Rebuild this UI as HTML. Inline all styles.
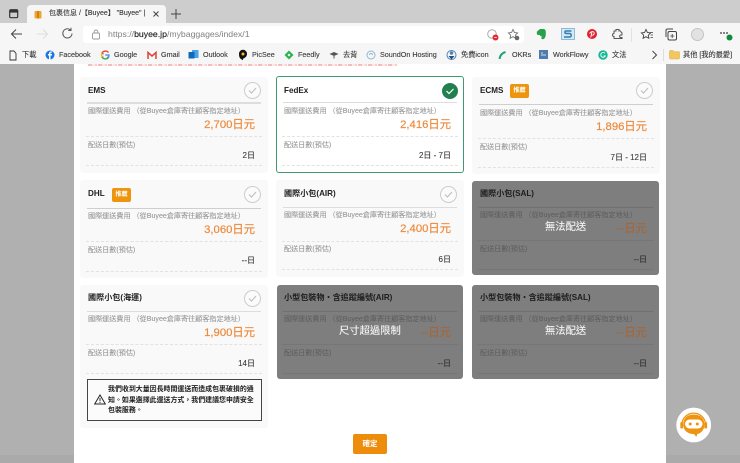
<!DOCTYPE html>
<html lang="zh-Hant">
<head>
<meta charset="utf-8">
<title>包裹信息</title>
<style>
html,body{margin:0;padding:0;width:740px;height:463px;overflow:hidden;background:#b0b0b0}
body{position:relative;font-family:"Liberation Sans","Noto Sans CJK TC",sans-serif}
#w{position:absolute;left:0;top:0;width:740px;height:463px;overflow:hidden;filter:blur(.25px)}
.a{position:absolute;white-space:nowrap}
.tb{font-size:7.2px;color:#3a3a3a;line-height:10px;top:50px;position:absolute;white-space:nowrap;-webkit-text-stroke:.12px #3a3a3a}
.card{position:absolute;background:#f9f9f9;border-radius:3px;width:188px}
.card>*{position:absolute;white-space:nowrap}
.t{left:8px;top:0;font-size:8.1px;font-weight:700;color:#222;line-height:10px}
.hr{left:7px;width:174px;height:1.5px;background:#ddd}
.l{left:8px;font-size:7.1px;color:#969696;line-height:10px;-webkit-text-stroke:.08px #969696}
.p{right:13px;font-size:11.3px;color:#ee8a3c;line-height:14px;-webkit-text-stroke:.2px #ee8a3c}
.d{right:13px;font-size:8px;color:#3a3a3a;line-height:10px;-webkit-text-stroke:.12px #3a3a3a}
.dash{left:6px;width:176px;border-top:1px dashed #e2e2e2;height:0}
.c{right:7px;width:15px;height:15px;border:1px solid #ccc;border-radius:50%;background:#fbfbfb}
.c svg{position:absolute;left:3px;top:3px}
.tag{width:19px;height:14px;border-radius:2px;background:#ee950f;color:#fff;font-size:6.2px;font-weight:700;text-align:center;line-height:14px}
.g{background:#7e7e7e;border:0}
.g .t{color:#1d1d1d}.g .hr{background:#707070;height:1px}.g .l{color:#5c5c5c;-webkit-text-stroke:0}
.g .p{color:#a5673a;-webkit-text-stroke:.2px #a5673a}.g .d{color:#2f2f2f;-webkit-text-stroke:.1px #2f2f2f}.g .dash{border-top:1px solid #767676}
.msg{font-size:10.3px;color:#f6f6f6;line-height:12px;-webkit-text-stroke:.1px #f6f6f6}
</style>
</head>
<body>
<div id="w">
<!-- browser chrome -->
<div class="a" style="left:0;top:0;width:740px;height:23px;background:#cdcdcd"></div>
<div class="a" style="left:0;top:23px;width:740px;height:41px;background:#f6f6f6"></div>
<div class="a" style="left:27px;top:5px;width:139px;height:18px;background:#f6f6f6;border-radius:4px 4px 0 0"></div>
<svg class="a" style="left:9px;top:9px" width="10" height="10"><rect x=".7" y=".7" width="8" height="8" rx="1.2" fill="none" stroke="#333" stroke-width="1.2"/><rect x="1" y="1" width="8" height="2.6" fill="#333"/></svg>
<svg class="a" style="left:33px;top:9px" width="10" height="10"><rect x="1.5" y="2" width="7" height="7.5" rx="1" fill="#efa72a"/><rect x="4.2" y="2" width="1.6" height="7.5" fill="#c9761a"/></svg>
<div class="a" style="left:49px;top:9px;font-size:7px;color:#333;line-height:10px;-webkit-text-stroke:.1px #333">包裹信息 /【Buyee】 "Buyee" |</div>
<svg class="a" style="left:152px;top:10px" width="9" height="9"><path d="M1.5 1.5l5 5M6.5 1.5l-5 5" stroke="#444" stroke-width="1"/></svg>
<svg class="a" style="left:170px;top:8px" width="12" height="12"><path d="M6 1v10M1 6h10" stroke="#444" stroke-width="1"/></svg>
<svg class="a" style="left:10px;top:28px" width="13" height="12"><path d="M12 6H1.5M6 1.5L1.5 6 6 10.5" fill="none" stroke="#444" stroke-width="1"/></svg>
<svg class="a" style="left:36px;top:28px" width="13" height="12"><path d="M1 6h10.5M7 1.5L11.5 6 7 10.5" fill="none" stroke="#ddd" stroke-width="1"/></svg>
<svg class="a" style="left:61px;top:27px" width="13" height="13"><path d="M11 6.5A4.6 4.6 0 1 1 9.500 3M10 .8V3.500H7.300" fill="none" stroke="#555" stroke-width="1"/></svg>
<div class="a" style="left:83px;top:26px;width:441px;height:17px;background:#fff;border-radius:3px"></div>
<svg class="a" style="left:91px;top:29px" width="10" height="11"><rect x="1.5" y="4" width="7" height="6" rx="1" fill="none" stroke="#999" stroke-width=".9"/><path d="M3.2 4V2.800a1.800 1.800 0 0 1 3.600 0V4" fill="none" stroke="#999" stroke-width=".9"/></svg>
<div class="a" style="left:108px;top:29px;font-size:8.7px;line-height:11px;color:#808080">https://<span style="color:#222;-webkit-text-stroke:.15px #222">buyee.jp</span>/mybaggages/index/1</div>
<svg class="a" style="left:486px;top:28px" width="14" height="14"><circle cx="6" cy="6" r="4.300" fill="none" stroke="#aaa"/><circle cx="9.500" cy="9.500" r="3" fill="#e22c35"/><path d="M8.300 9.500h2.400" stroke="#fff" stroke-width=".8"/></svg>
<svg class="a" style="left:507px;top:28px" width="14" height="14"><path d="M6 1.500l1.400 3 3.200.4-2.300 2.200.6 3.200L6 8.700l-2.900 1.600.6-3.200L1.400 4.900l3.200-.4z" fill="none" stroke="#777" stroke-width=".9"/><circle cx="10" cy="10" r="2.300" fill="#666"/></svg>
<svg class="a" style="left:535px;top:28px" width="12" height="13"><path d="M2 3.500L5 1h3.500C10 1 10.800 2 10.800 4c.2 3-.3 6-2 7-1.500.5-2.500 0-2.500-1 0-1.500 2-1.200 2-.6-1-.8-3-1-3.500-2.400H3C2 7 1.500 5.500 2 3.500z" fill="#27a24a"/></svg>
<svg class="a" style="left:561px;top:28px" width="14" height="13"><rect x=".5" y=".5" width="13" height="11" fill="#d5e8f5" stroke="#5a93bd" stroke-width=".6"/><path d="M10.500 3H5C3.500 3 3.500 5.500 5.500 5.500h3C10.800 5.500 10.800 9 8.500 9H3" fill="none" stroke="#2f7fb5" stroke-width="1.500"/></svg>
<svg class="a" style="left:586px;top:28px" width="12" height="12"><circle cx="6" cy="6" r="5" fill="#e0232e"/><path d="M4.700 9.500L6 4M3.900 5.800C3.300 3.600 8.100 2.500 8.200 5c0 2.400-2.300 2.600-2.700 1.600" fill="none" stroke="#fff" stroke-width=".9"/></svg>
<svg class="a" style="left:611px;top:28px" width="13" height="13"><path d="M5 1.500h3V3a1.300 1.300 0 0 1 2 1l1 1v2H9.500a1.300 1.300 0 0 0 0 2.500H11v1H3V8.500a1.500 1.500 0 0 1 0-3V3h2z" fill="none" stroke="#555" stroke-width="1"/></svg>
<div class="a" style="left:631px;top:28px;width:1px;height:14px;background:#e2e2e2"></div>
<svg class="a" style="left:640px;top:28px" width="14" height="13"><path d="M6 1.500l1.400 3 3.200.4-2.300 2.200.6 3.200L6 8.700l-2.900 1.600.6-3.200L1.400 4.900l3.200-.4z" fill="none" stroke="#444" stroke-width=".9"/><path d="M10 4.500h3M10.500 7h2.500M10.500 9.500h2.500" stroke="#444" stroke-width=".8"/></svg>
<svg class="a" style="left:665px;top:28px" width="13" height="13"><rect x="3" y="3.500" width="8.500" height="8.500" rx="1.500" fill="none" stroke="#444"/><path d="M1 9V2.500C1 1.500 1.500 1 2.500 1H8" fill="none" stroke="#444"/><path d="M7.200 6v4M5.200 8h4" stroke="#444" stroke-width=".8"/></svg>
<div class="a" style="left:691px;top:28px;width:11px;height:11px;background:#e2e2e2;border-radius:50%;border:1px solid #c4c4c4"></div>
<svg class="a" style="left:719px;top:30px" width="16" height="12"><circle cx="2" cy="3" r=".9" fill="#333"/><circle cx="5" cy="3" r=".9" fill="#333"/><circle cx="8" cy="3" r=".9" fill="#333"/><circle cx="10.500" cy="7.500" r="3" fill="#128a3c"/></svg>
<!-- bookmarks -->
<svg class="a" style="left:9px;top:50px" width="8" height="11"><path d="M1 1h4l2 2.500V10H1z" fill="none" stroke="#333" stroke-width=".9"/></svg>
<span class="tb" style="left:22px">下載</span>
<svg class="a" style="left:45px;top:50px" width="10" height="10"><circle cx="5" cy="5" r="4.500" fill="#1d77e0"/><path d="M5.500 9.500V5.500H7V4H5.500V3.200c0-.5.300-.7 1.500-.6V1.500C5 1.200 4 2 4 3.500V4H3v1.500h1v4z" fill="#fff"/></svg>
<span class="tb" style="left:59px">Facebook</span>
<svg class="a" style="left:100px;top:50px" width="10" height="10"><path d="M8.500 2.500A4 4 0 0 0 2 3l1.500 1.200" fill="none" stroke="#e5453b" stroke-width="1.300"/><path d="M2 3a4 4 0 0 0 0 4l1.500-1" fill="none" stroke="#f3b81c" stroke-width="1.300"/><path d="M2 7a4 4 0 0 0 6 1L7 7" fill="none" stroke="#35a853" stroke-width="1.300"/><path d="M5.200 5H9a4 4 0 0 1-1 3" fill="none" stroke="#4285f4" stroke-width="1.300"/></svg>
<span class="tb" style="left:114px">Google</span>
<svg class="a" style="left:147px;top:51px" width="10" height="9"><path d="M1 8V1.500L5 5l4-3.500V8" fill="none" stroke="#d8443b" stroke-width="1.500"/></svg>
<span class="tb" style="left:161px">Gmail</span>
<svg class="a" style="left:188px;top:49px" width="11" height="11"><rect x="4" y="1" width="6.500" height="8" fill="#49a3e6"/><rect x=".5" y="3" width="6" height="6.500" fill="#0f69b8"/></svg>
<span class="tb" style="left:203px">Outlook</span>
<svg class="a" style="left:238px;top:49px" width="10" height="12"><path d="M5 .8a4 4 0 0 1 4 4c0 3-2 4-4 5v1.500L3 10c-1.500-.8-2-3-2-5a4 4 0 0 1 4-4.200z" fill="#121212"/><circle cx="5" cy="5" r="1.500" fill="#f4c21f"/></svg>
<span class="tb" style="left:252px">PicSee</span>
<svg class="a" style="left:284px;top:50px" width="10" height="10"><path d="M5 .5L9.500 5 5 9.500.5 5z" fill="#2ab24c"/><path d="M5 3.500L6.500 5 5 6.500 3.500 5z" fill="#fff"/></svg>
<span class="tb" style="left:298px">Feedly</span>
<svg class="a" style="left:329px;top:51px" width="10" height="8"><path d="M.5 3L5 1l4.500 2L5 5z" fill="#555"/><path d="M5 5v2.500" stroke="#555"/></svg>
<span class="tb" style="left:343px">去背</span>
<svg class="a" style="left:366px;top:50px" width="10" height="10"><circle cx="5" cy="5" r="4" fill="none" stroke="#8fb9d3" stroke-width="1"/><path d="M3.500 5a1.500 1.500 0 0 1 3 0" fill="none" stroke="#8fb9d3"/></svg>
<span class="tb" style="left:380px">SoundOn Hosting</span>
<svg class="a" style="left:446px;top:49px" width="11" height="12"><circle cx="5.500" cy="6" r="4.500" fill="none" stroke="#4c84b8"/><path d="M2.500 7h6l-3 3.500z" fill="#22527f"/><circle cx="5.500" cy="4" r="1.800" fill="#4c84b8"/></svg>
<span class="tb" style="left:461px">免費icon</span>
<svg class="a" style="left:498px;top:50px" width="9" height="10"><path d="M1.500 9C2 5.500 4 3 7.500 2" fill="none" stroke="#1fa27a" stroke-width="2"/></svg>
<span class="tb" style="left:512px">OKRs</span>
<svg class="a" style="left:539px;top:50px" width="9" height="10"><rect width="9" height="9" fill="#4d7dae"/><path d="M2 3h2M2 5h5" stroke="#fff" stroke-width=".8"/></svg>
<span class="tb" style="left:553px">WorkFlowy</span>
<svg class="a" style="left:598px;top:50px" width="10" height="10"><circle cx="5" cy="5" r="4.700" fill="#16b894"/><path d="M7 3.300A2.400 2.400 0 1 0 7.300 6H5.500" fill="none" stroke="#fff" stroke-width=".9"/></svg>
<span class="tb" style="left:612px">文法</span>
<svg class="a" style="left:651px;top:50px" width="7" height="10"><path d="M1.500 1l4 4-4 4" fill="none" stroke="#444"/></svg>
<div class="a" style="left:663px;top:49px;width:1px;height:12px;background:#ddd"></div>
<svg class="a" style="left:669px;top:49px" width="11" height="11"><path d="M.5 2.500C.5 1.800 1 1.500 1.500 1.500h2.500l1 1.200h5c.5 0 .5.300.5.800v5.500c0 .5-.3 1-1 1h-8c-.7 0-1-.5-1-1z" fill="#f3c75e" stroke="#d9a93d" stroke-width=".5"/></svg>
<span class="tb" style="left:683px">其他 [我的最愛]</span>
<!-- page -->
<div class="a" style="left:0;top:64px;width:740px;height:399px;background:#b0b0b0"></div>
<div class="a" style="left:0;top:455px;width:740px;height:8px;background:#aaa"></div>
<div class="a" style="left:74px;top:64px;width:592px;height:399px;background:#fff"></div>
<div class="a" style="left:88px;top:64px;width:310px;height:1.5px;background:repeating-linear-gradient(90deg,#f6bcbc 0 4px,#fde6e6 4px 7px,#f8cccc 7px 9px,#fff 9px 10px)"></div>

<!-- Row 1 -->
<div class="card" style="left:80px;top:77px;height:96px">
<div class="t" style="top:9px">EMS</div>
<div class="c" style="top:5px"><svg width="9" height="9"><path d="M1 4.500l2.500 2.500L8 2" fill="none" stroke="#bbb"/></svg></div>
<div class="hr" style="top:25px"></div>
<div class="l" style="top:29px">國際運送費用 （從Buyee倉庫寄往顧客指定地址）</div>
<div class="p" style="top:41px">2,700日元</div>
<div class="dash" style="top:59px"></div>
<div class="l" style="top:63px">配送日數(預估)</div>
<div class="d" style="top:74px">2日</div>
<div class="dash" style="top:88px"></div>
</div>

<div class="card" style="left:276px;top:76px;height:97px;width:188px;background:#fff;box-sizing:border-box;border:1.5px solid #3f9a72">
<div class="t" style="left:7px;top:8.5px">FedEx</div>
<div style="right:5.5px;top:5.5px;width:16px;height:16px;border-radius:50%;background:#22804f"><svg width="16" height="16" style="position:absolute;left:0;top:0"><path d="M4.500 8l2.500 2.500 4.500-4.500" fill="none" stroke="#fff" stroke-width="1.200"/></svg></div>
<div class="hr" style="left:6px;top:24.5px"></div>
<div class="l" style="left:7px;top:28.5px">國際運送費用 （從Buyee倉庫寄往顧客指定地址）</div>
<div class="p" style="right:12px;top:40.5px">2,416日元</div>
<div class="dash" style="left:5px;top:58.5px"></div>
<div class="l" style="left:7px;top:62.5px">配送日數(預估)</div>
<div class="d" style="right:12px;top:73.5px">2日 - 7日</div>
<div class="dash" style="left:5px;top:87.5px"></div>
</div>

<div class="card" style="left:472px;top:77px;height:97px">
<div class="t" style="top:9px">ECMS</div>
<div class="tag" style="left:38px;top:7px">推薦</div>
<div class="c" style="top:5px"><svg width="9" height="9"><path d="M1 4.500l2.500 2.500L8 2" fill="none" stroke="#bbb"/></svg></div>
<div class="hr" style="top:27px;height:1px;background:#cfcfcf"></div>
<div class="l" style="top:30.5px">國際運送費用 （從Buyee倉庫寄往顧客指定地址）</div>
<div class="p" style="top:42.5px">1,896日元</div>
<div class="dash" style="top:61px"></div>
<div class="l" style="top:64.5px">配送日數(預估)</div>
<div class="d" style="top:75.5px">7日 - 12日</div>
<div class="dash" style="top:90px"></div>
</div>

<!-- Row 2 -->
<div class="card" style="left:80px;top:180px;height:98px">
<div class="t" style="top:9px">DHL</div>
<div class="tag" style="left:32px;top:8px">推薦</div>
<div class="c" style="top:6px"><svg width="9" height="9"><path d="M1 4.500l2.500 2.500L8 2" fill="none" stroke="#bbb"/></svg></div>
<div class="hr" style="top:28px;height:1px;background:#cfcfcf"></div>
<div class="l" style="top:31px">國際運送費用 （從Buyee倉庫寄往顧客指定地址）</div>
<div class="p" style="top:43px">3,060日元</div>
<div class="dash" style="top:61px"></div>
<div class="l" style="top:65px">配送日數(預估)</div>
<div class="d" style="top:76px">--日</div>
<div class="dash" style="top:91px"></div>
</div>

<div class="card" style="left:276px;top:180px;height:97px">
<div class="t" style="top:9px">國際小包(AIR)</div>
<div class="c" style="top:6px"><svg width="9" height="9"><path d="M1 4.500l2.500 2.500L8 2" fill="none" stroke="#bbb"/></svg></div>
<div class="hr" style="top:26.5px"></div>
<div class="l" style="top:30px">國際運送費用 （從Buyee倉庫寄往顧客指定地址）</div>
<div class="p" style="top:42px">2,400日元</div>
<div class="dash" style="top:60.5px"></div>
<div class="l" style="top:64px">配送日數(預估)</div>
<div class="d" style="top:75px">6日</div>
<div class="dash" style="top:89px"></div>
</div>

<div class="card g" style="left:472px;top:181px;height:94px;width:187px">
<div class="t" style="top:8px">國際小包(SAL)</div>
<div class="hr" style="top:25.5px"></div>
<div class="l" style="top:29px">國際運送費用 （從Buyee倉庫寄往顧客指定地址）</div>
<div class="msg" style="left:73px;top:40.7px">無法配送</div>
<div class="p" style="right:12px;top:41px">--日元</div>
<div class="dash" style="top:59px"></div>
<div class="l" style="top:63px">配送日數(預估)</div>
<div class="d" style="right:12px;top:74px">--日</div>
<div class="dash" style="top:88px"></div>
</div>

<!-- Row 3 -->
<div class="card" style="left:80px;top:285px;height:143px">
<div class="t" style="top:8px">國際小包(海運)</div>
<div class="c" style="top:5px"><svg width="9" height="9"><path d="M1 4.500l2.500 2.500L8 2" fill="none" stroke="#bbb"/></svg></div>
<div class="hr" style="top:25.5px"></div>
<div class="l" style="top:29px">國際運送費用 （從Buyee倉庫寄往顧客指定地址）</div>
<div class="p" style="top:41px">1,900日元</div>
<div class="dash" style="top:59px"></div>
<div class="l" style="top:63px">配送日數(預估)</div>
<div class="d" style="top:74px">14日</div>
<div class="dash" style="top:88px"></div>
<div style="left:7px;top:94px;width:173px;height:40px;border:1px solid #444;background:#fbfbfb">
<svg style="position:absolute;left:6px;top:14px" width="12" height="11"><path d="M6 1L11.300 10H.7z" fill="none" stroke="#222" stroke-width="1"/><path d="M6 4v3.200M6 8v1" stroke="#222" stroke-width=".9"/></svg>
<div style="position:absolute;left:20px;top:5px;width:150px;font-size:6.95px;font-weight:700;color:#222;line-height:10.5px;white-space:normal">我們收到大量因長時間運送而造成包裹破損的通知。如果選擇此運送方式，我們建議您申請安全包裝服務。</div>
</div>
</div>

<div class="card g" style="left:277px;top:285px;height:94px;width:186px">
<div class="t" style="left:7px;top:8px">小型包裝物・含追蹤編號(AIR)</div>
<div class="hr" style="left:6px;top:25.5px"></div>
<div class="l" style="left:7px;top:29px">國際運送費用 （從Buyee倉庫寄往顧客指定地址）</div>
<div class="msg" style="left:62px;top:41px">尺寸超過限制</div>
<div class="p" style="right:12px;top:41px">--日元</div>
<div class="dash" style="left:5px;top:59px"></div>
<div class="l" style="left:7px;top:63px">配送日數(預估)</div>
<div class="d" style="right:12px;top:74px">--日</div>
<div class="dash" style="left:5px;top:88px"></div>
</div>

<div class="card g" style="left:472px;top:285px;height:94px;width:187px">
<div class="t" style="top:8px">小型包裝物・含追蹤編號(SAL)</div>
<div class="hr" style="top:25.5px"></div>
<div class="l" style="top:29px">國際運送費用 （從Buyee倉庫寄往顧客指定地址）</div>
<div class="msg" style="left:73px;top:41px">無法配送</div>
<div class="p" style="right:12px;top:41px">--日元</div>
<div class="dash" style="top:59px"></div>
<div class="l" style="top:63px">配送日數(預估)</div>
<div class="d" style="right:12px;top:74px">--日</div>
<div class="dash" style="top:88px"></div>
</div>

<div class="a" style="left:353px;top:434px;width:34px;height:20px;background:#ee8c0c;border-radius:2px;color:#fff;font-size:7.5px;font-weight:700;text-align:center;line-height:20px">確定</div>

<!-- chat robot -->
<svg class="a" style="left:675px;top:407px" width="38" height="36" viewBox="0 0 38 36">
<circle cx="18.7" cy="18" r="17.4" fill="#fff"/>
<path d="M6.800 18a11.900 11.900 0 0 1 23.800 0" fill="none" stroke="#ef9410" stroke-width="1.300"/>
<path d="M18.700 7.500c7 0 10.700 4.300 10.700 10s-3.800 9-7 9.500l-1 2.800c-.5 0-2-2.800-2.800-2.800-6 0-10.400-3.800-10.400-9.500s3.500-10 10.500-10z" fill="#ef9410"/>
<rect x="10" y="12.500" width="17.500" height="9" rx="4.500" fill="#fff"/>
<circle cx="15.200" cy="17" r="1.500" fill="#ef9410"/>
<circle cx="22.300" cy="17" r="1.500" fill="#ef9410"/>
<rect x="5.300" y="15" width="2.800" height="6.500" rx="1.300" fill="#ef9410"/>
<rect x="29.300" y="15" width="2.800" height="6.500" rx="1.300" fill="#ef9410"/>
</svg>
</div>
</body>
</html>
